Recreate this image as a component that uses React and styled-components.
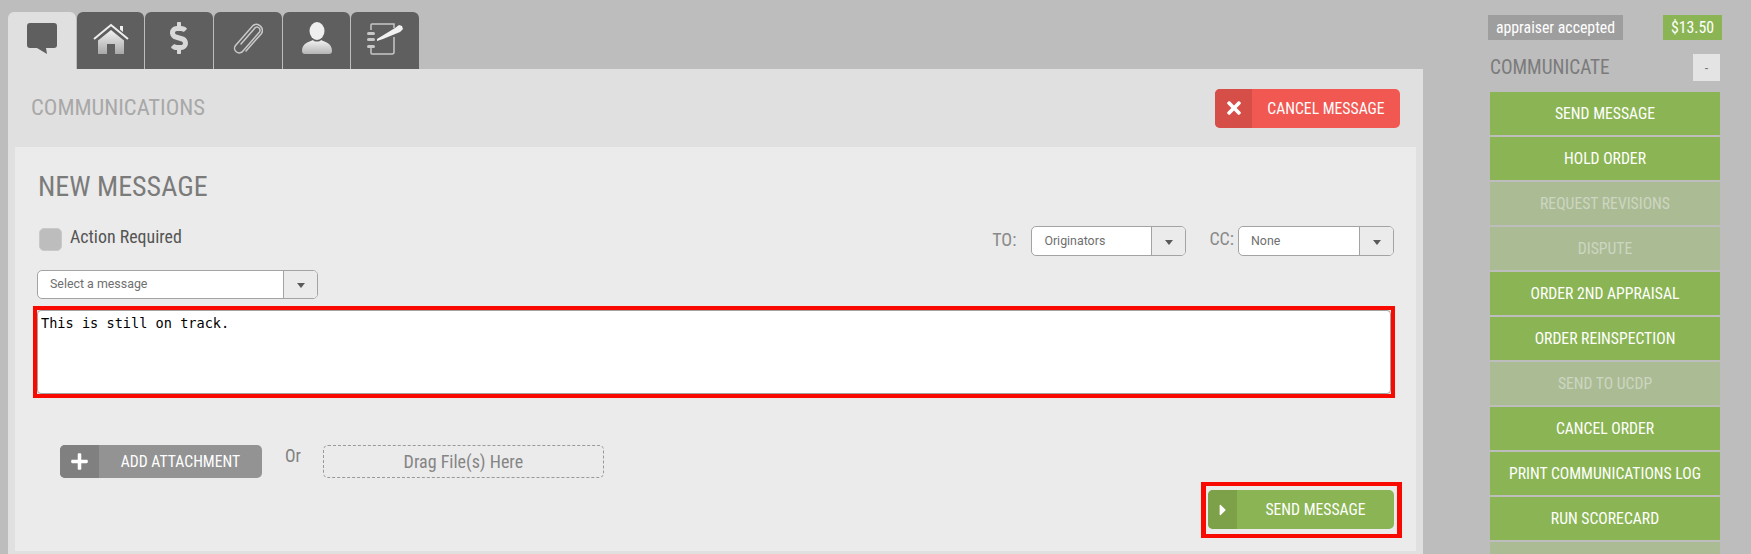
import React from 'react';
import styled, { createGlobalStyle } from 'styled-components';
import { FaTimes, FaPlus, FaDollarSign, FaCaretRight } from 'react-icons/fa';

const GlobalStyle = createGlobalStyle`
  html, body { margin: 0; padding: 0; height: 100%; overflow: hidden; background: #bdbdbd; }
  * { box-sizing: border-box; }
  body { font-family: "Roboto Condensed", Roboto, "Liberation Sans", sans-serif; font-stretch: 75%; }
`;

const Page = styled.div`
  display: flex;
  height: 100vh;
  overflow: hidden;
  padding: 12px 0 0 8px;
`;

const Main = styled.div`
  width: 1415px;
  flex: none;
`;

const Tabs = styled.div`
  display: flex;
  gap: 1px;
  height: 57px;
`;

const Tab = styled.div`
  width: 67.7px;
  height: 57px;
  display: flex;
  align-items: center;
  justify-content: center;
  padding-bottom: 5px;
  border-radius: 6px 6px 0 0;
  background: ${p => (p.$active ? '#e0e0e0' : '#5f5f5f')};
`;

const Panel = styled.div`
  background: #e0e0e0;
  padding: 0 7px 3px;
`;

const PanelHeader = styled.div`
  height: 78px;
  display: flex;
  align-items: center;
  justify-content: space-between;
  padding: 0 16px 0 16px;
`;

const PanelTitle = styled.div`
  font-size: 22.6px;
  color: #a8a8a8;
  padding-bottom: 2px;
`;

const IconButton = styled.button`
  display: flex;
  align-items: stretch;
  padding: 0;
  border: 0;
  border-radius: 5px;
  overflow: hidden;
  color: #fff;
  font: inherit;
  font-size: 15.7px;
  width: ${p => p.$w}px;
  height: ${p => p.$h}px;
  background: ${p => p.$bg};
`;

const IconSlot = styled.span`
  flex: none;
  width: ${p => p.$w}px;
  display: flex;
  align-items: center;
  justify-content: center;
  background: ${p => p.$bg};
`;

const ButtonLabel = styled.span`
  flex: 1;
  display: flex;
  align-items: center;
  justify-content: center;
`;

const Card = styled.div`
  background: #ebebeb;
  height: 404px;
  padding-top: 25px;
`;

const CardTitle = styled.h2`
  margin: 0 0 24px 23px;
  font-size: 28px;
  line-height: 30px;
  font-weight: 400;
  color: #7b7b7b;
`;

const FormRow = styled.div`
  display: flex;
  align-items: center;
  height: 30px;
  padding: 0 22px 0 24px;
`;

const CheckLabel = styled.label`
  display: flex;
  align-items: center;
  gap: 8px;
  font-size: 17.900px;
  color: #555;
  margin-right: auto;
  padding-bottom: 9px;
`;

const CheckBox = styled.span`
  width: 23px;
  height: 23px;
  margin-top: 6px;
  border-radius: 5px;
  background: #bdbdbd;
  border: 1px solid #c9c9c9;
`;

const FieldLabel = styled.span`
  font-size: 18px;
  color: #8a8a8a;
  margin-right: ${p => p.$gap}px;
  margin-left: ${p => p.$left || 0}px;
  padding-bottom: ${p => p.$up}px;
`;

const Select = styled.div`
  display: flex;
  width: ${p => p.$w}px;
  height: ${p => p.$h}px;
  margin-left: ${p => p.$left || 0}px;
  margin-top: ${p => p.$top || 0}px;
  border: 1px solid #a3a3a3;
  border-radius: 5px;
  background: #fff;
  overflow: hidden;
`;

const SelectValue = styled.span`
  flex: 1;
  display: flex;
  align-items: center;
  padding: 0 0 2px 12px;
  font-family: Roboto, "Liberation Sans", sans-serif;
  font-stretch: normal;
  font-size: 12.400px;
  color: #6f6f6f;
`;

const SelectArrow = styled.span`
  flex: none;
  width: 34px;
  display: flex;
  align-items: center;
  justify-content: center;
  background: #ebebeb;
  border-left: 1px solid #a3a3a3;
  &::after {
    content: '';
    margin-top: 2px;
    border-style: solid;
    border-width: 5px 4.5px 0;
    border-color: #5a5a5a transparent transparent;
  }
`;

const RedFrame = styled.div`
  border: solid #f80a00;
  border-width: ${p => p.$bw};
`;

const TextFrame = styled(RedFrame)`
  width: 1362px;
  height: 92px;
  margin: 7px 0 0 18px;
`;

const MessageBox = styled.textarea`
  display: block;
  width: 100%;
  height: 100%;
  padding: 3px 3px;
  border: 1px solid #a3a3a3;
  border-radius: 4px;
  background: #fff;
  color: #000;
  font-family: "DejaVu Sans Mono", monospace;
  font-stretch: normal;
  font-size: 13.6px;
  line-height: 18px;
  outline: none;
  resize: none;
`;

const AttachRow = styled.div`
  display: flex;
  align-items: flex-start;
  height: 33px;
  margin: 47px 0 0 45px;
`;

const OrText = styled.span`
  margin: 1px 22px 0 23px;
  font-size: 17.500px;
  line-height: 20px;
  color: #808080;
`;

const DropZone = styled.div`
  width: 281px;
  height: 33px;
  display: flex;
  align-items: center;
  justify-content: center;
  padding-bottom: 1px;
  border: 1px dashed #999;
  border-radius: 5px;
  font-size: 18px;
  color: #858585;
`;

const SendRow = styled.div`
  display: flex;
  justify-content: flex-end;
  margin: 4px 14px 0 0;
`;

const SendFrame = styled(RedFrame)`
  width: 201px;
  height: 56px;
  padding: 4px 3px 0 2px;
`;

const Sidebar = styled.aside`
  width: 234px;
  margin-left: 65px;
  padding-top: 3px;
`;

const StatusRow = styled.div`
  display: flex;
  justify-content: space-between;
  height: 25px;
`;

const Badge = styled.span`
  display: flex;
  align-items: center;
  justify-content: center;
  width: ${p => p.$w}px;
  background: ${p => p.$bg};
  color: #fff;
  font-size: 15.8px;
`;

const SectionHead = styled.div`
  display: flex;
  align-items: center;
  justify-content: space-between;
  height: 27px;
  margin: 14px 2px 11px 2px;
`;

const SectionTitle = styled.span`
  font-size: 19.300px;
  color: #7b7b7b;
`;

const Collapse = styled.span`
  width: 27px;
  height: 27px;
  display: flex;
  align-items: center;
  justify-content: center;
  background: #e4e4e4;
  color: #777;
  font-size: 14px;
`;

const ActionList = styled.div`
  display: flex;
  flex-direction: column;
  gap: 2px;
  margin: 0 2px;
`;

const ActionButton = styled.div`
  flex: none;
  height: 43px;
  display: flex;
  align-items: center;
  justify-content: center;
  font-size: 15.7px;
  background: ${p => (p.$off ? '#abbc95' : '#8bb554')};
  color: ${p => (p.$off ? '#cdd6c1' : '#fff')};
`;

const actions = [
  ['SEND MESSAGE'],
  ['HOLD ORDER'],
  ['REQUEST REVISIONS', true],
  ['DISPUTE', true],
  ['ORDER 2ND APPRAISAL'],
  ['ORDER REINSPECTION'],
  ['SEND TO UCDP', true],
  ['CANCEL ORDER'],
  ['PRINT COMMUNICATIONS LOG'],
  ['RUN SCORECARD'],
  ['', true],
];

const ChatIcon = () => (
  <svg width="30" height="31" viewBox="0 0 30 31">
    <path fill="#5f5f5f" d="M3 0h24a3 3 0 0 1 3 3v19a3 3 0 0 1-3 3h-8l1 6-10-6H3a3 3 0 0 1-3-3V3a3 3 0 0 1 3-3z" />
  </svg>
);

const HomeIcon = () => (
  <svg width="36" height="31" viewBox="0 0 36 31">
    <defs>
      <linearGradient id="tabGrad" x1="0" y1="0" x2="0" y2="1">
        <stop offset="0" stopColor="#f2f2f2" />
        <stop offset="1" stopColor="#a8a8a8" />
      </linearGradient>
    </defs>
    <path fill="none" stroke="#efefef" strokeWidth="2" d="M1 16 18 2l17 14" />
    <path fill="#efefef" d="M27 3h3v6l-3-2.500z" />
    <path fill="url(#tabGrad)" d="M18 7 31 17.500V31H22V21h-8v10H5V17.500z" />
  </svg>
);

const ClipIcon = () => (
  <svg width="31" height="33" viewBox="0 0 31 33">
    <path
      fill="none"
      stroke="#c9c9c9"
      strokeWidth="1.500"
      strokeLinecap="round"
      d="M9 22 22.500 6.500a3 3 0 0 1 5 3.500L11 29a4.500 4.500 0 0 1-7.500-5.500L21 3.500a6 6 0 0 1 8.500 8L14 29"
    />
  </svg>
);

const UserIcon = () => (
  <svg width="30" height="32" viewBox="0 0 30 32">
    <defs>
      <linearGradient id="userGrad" x1="0" y1="0" x2="0" y2="1">
        <stop offset="0" stopColor="#f2f2f2" />
        <stop offset="1" stopColor="#b5b5b5" />
      </linearGradient>
    </defs>
    <ellipse cx="15" cy="9" rx="7.500" ry="9" fill="#efefef" />
    <path fill="url(#userGrad)" d="M11 18c1 2 7 2 8 0 4 2 11 3 11 11 0 2-1 3-3 3H3c-2 0-3-1-3-3 0-8 7-9 11-11z" />
  </svg>
);

const NotebookIcon = () => (
  <svg width="38" height="33" viewBox="0 0 38 33">
    <path fill="none" stroke="#c8c8c8" strokeWidth="1.500" d="M28 15v15a2 2 0 0 1-2 2H6a1 1 0 0 1-1-1V26M5 8V3a1 1 0 0 1 1-1h22v4" />
    <g fill="#c8c8c8">
      <rect x="1" y="10" width="8" height="3" rx="1.500" />
      <rect x="1" y="16" width="8" height="3" rx="1.500" />
      <rect x="1" y="23" width="8" height="3" rx="1.500" />
    </g>
    <path fill="#f2f2f2" d="M11 17 29 6l4-3 3 1 1 3-3 3-17 7-6 2z" />
  </svg>
);

export default function App() {
  return (
    <>
      <GlobalStyle />
      <Page>
        <Main>
          <Tabs>
            <Tab $active><ChatIcon /></Tab>
            <Tab><HomeIcon /></Tab>
            <Tab><FaDollarSign size={32} color="#d8d8d8" /></Tab>
            <Tab><ClipIcon /></Tab>
            <Tab><UserIcon /></Tab>
            <Tab><NotebookIcon /></Tab>
          </Tabs>
          <Panel>
            <PanelHeader>
              <PanelTitle>COMMUNICATIONS</PanelTitle>
              <IconButton $bg="#f15851" $w={185} $h={39}>
                <IconSlot $w={37} $bg="#d64e48"><FaTimes size={20} /></IconSlot>
                <ButtonLabel>CANCEL MESSAGE</ButtonLabel>
              </IconButton>
            </PanelHeader>
            <Card>
              <CardTitle>NEW MESSAGE</CardTitle>
              <FormRow>
                <CheckLabel><CheckBox />Action Required</CheckLabel>
                <FieldLabel $gap={15} $up={4}>TO:</FieldLabel>
                <Select $w={155} $h={30}>
                  <SelectValue>Originators</SelectValue>
                  <SelectArrow />
                </Select>
                <FieldLabel $left={23} $gap={4} $up={6}>CC:</FieldLabel>
                <Select $w={156} $h={30}>
                  <SelectValue>None</SelectValue>
                  <SelectArrow />
                </Select>
              </FormRow>
              <Select $w={281} $h={29} $left={22} $top={14}>
                <SelectValue>Select a message</SelectValue>
                <SelectArrow />
              </Select>
              <TextFrame $bw="4px">
                <MessageBox readOnly defaultValue="This is still on track." />
              </TextFrame>
              <AttachRow>
                <IconButton $bg="#939393" $w={202} $h={33}>
                  <IconSlot $w={39} $bg="#808080"><FaPlus size={19} /></IconSlot>
                  <ButtonLabel>ADD ATTACHMENT</ButtonLabel>
                </IconButton>
                <OrText>Or</OrText>
                <DropZone>Drag File(s) Here</DropZone>
              </AttachRow>
              <SendRow>
                <SendFrame $bw="4px 5px">
                  <IconButton $bg="#8bb554" $w={186} $h={39}>
                    <IconSlot $w={29} $bg="#7ca148"><FaCaretRight size={18} /></IconSlot>
                    <ButtonLabel>SEND MESSAGE</ButtonLabel>
                  </IconButton>
                </SendFrame>
              </SendRow>
            </Card>
          </Panel>
        </Main>
        <Sidebar>
          <StatusRow>
            <Badge $w={135} $bg="#9e9e9e">appraiser accepted</Badge>
            <Badge $w={59} $bg="#8bb554">$13.50</Badge>
          </StatusRow>
          <SectionHead>
            <SectionTitle>COMMUNICATE</SectionTitle>
            <Collapse>-</Collapse>
          </SectionHead>
          <ActionList>
            {actions.map(([label, off], i) => (
              <ActionButton key={i} $off={off}>{label}</ActionButton>
            ))}
          </ActionList>
        </Sidebar>
      </Page>
    </>
  );
}
